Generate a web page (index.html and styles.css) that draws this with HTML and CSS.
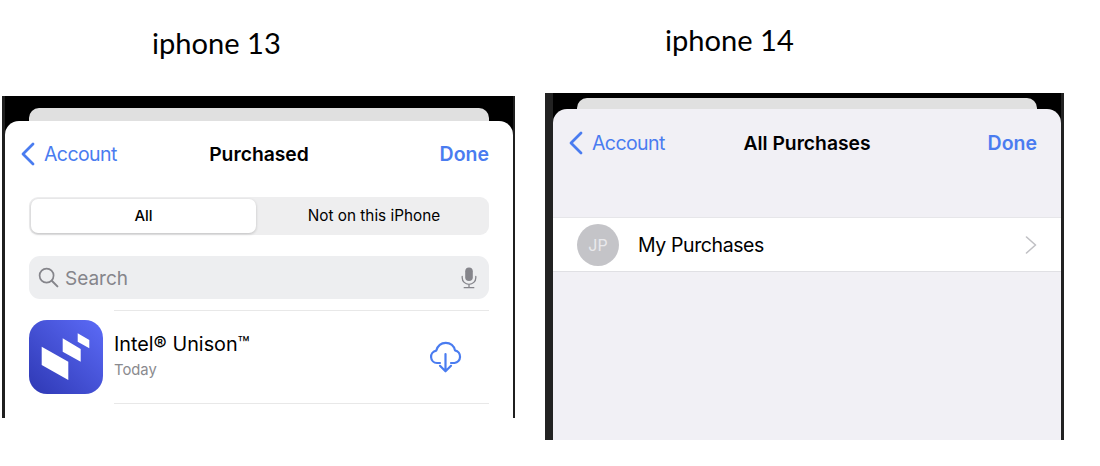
FILE: index.html
```html
<!DOCTYPE html>
<html lang="en">
<head>
  <meta charset="UTF-8">
  <title>iphone 13 / iphone 14</title>
  <link rel="stylesheet" href="styles.css">
</head>
<body>
  <div class="compare">
    <section class="col col-13">
      <h2 class="label">iphone 13</h2>
      <div class="phone">
        <div class="back-card"></div>
        <div class="sheet">
          <div class="nav">
            <a class="back" href="#">
              <svg width="15" height="24" viewBox="0 0 15 24"><path d="M13 2 3 12l10 10" fill="none" stroke="#4a7cf0" stroke-width="2.8" stroke-linecap="round" stroke-linejoin="round"/></svg>
              <span>Account</span>
            </a>
            <div class="nav-title">Purchased</div>
            <a class="done" href="#">Done</a>
          </div>

          <div class="segment">
            <div class="seg-item seg-active">All</div>
            <div class="seg-item seg-other">Not on this iPhone</div>
          </div>

          <div class="search">
            <svg width="21" height="21" viewBox="0 0 21 21"><circle cx="8.6" cy="8.6" r="7" fill="none" stroke="#85858b" stroke-width="1.7"/><path d="m13.8 13.8 5.6 5.6" stroke="#85858b" stroke-width="2" stroke-linecap="round"/></svg>
            <span class="search-text">Search</span>
            <svg class="mic" width="16" height="22" viewBox="0 0 16 22"><rect x="4.2" y="0.5" width="7.6" height="13.5" rx="3.8" fill="#85858b"/><path d="M1.2 9.5v1.2c0 3.7 3 6.6 6.8 6.6s6.800-2.900 6.800-6.600V9.500M8 17.300v3.200M3.200 20.700h9.600" fill="none" stroke="#85858b" stroke-width="1.300" stroke-linecap="round"/></svg>
          </div>

          <div class="app-row">
            <svg class="app-icon" width="74" height="74" viewBox="0 0 74 74">
              <defs>
                <linearGradient id="appgrad" x1="0" y1="1" x2="1" y2="0">
                  <stop offset="0" stop-color="#2e38b4"/>
                  <stop offset="1" stop-color="#5c6bf7"/>
                </linearGradient>
              </defs>
              <rect width="74" height="74" rx="18" fill="url(#appgrad)"/>
              <path d="M12.7 26.7 39.3 41.7V60L12.7 45Z M33.7 18.3 51.7 29V41.700L33.700 31.700Z M48.700 13.300 60.300 20V28.300L48.700 21.700Z" fill="#fff"/>
            </svg>
            <div class="app-body">
              <div class="app-info">
                <div class="app-name">Intel® Unison™</div>
                <div class="app-date">Today</div>
              </div>
              <svg class="cloud" width="33" height="32" viewBox="0 0 33 32"><path d="M11 22H8a6.200 6.200 0 0 1-.8-12.300C8.600 4.900 12.300 1.800 16.800 1.800c4.600 0 8.300 3.200 9.200 7.600A6.400 6.400 0 0 1 25.500 22H22" fill="none" stroke="#4a7cf0" stroke-width="2.200" stroke-linecap="round" stroke-linejoin="round"/><path d="M16.500 13v17M11 24.800l5.500 5.500 5.500-5.500" fill="none" stroke="#4a7cf0" stroke-width="2.200" stroke-linecap="round" stroke-linejoin="round"/></svg>
            </div>
          </div>
        </div>
      </div>
    </section>

    <section class="col col-14">
      <h2 class="label">iphone 14</h2>
      <div class="phone">
        <div class="back-card"></div>
        <div class="sheet sheet-grey">
          <div class="nav">
            <a class="back" href="#">
              <svg width="15" height="24" viewBox="0 0 15 24"><path d="M13 2 3 12l10 10" fill="none" stroke="#4a7cf0" stroke-width="2.800" stroke-linecap="round" stroke-linejoin="round"/></svg>
              <span>Account</span>
            </a>
            <div class="nav-title">All Purchases</div>
            <a class="done" href="#">Done</a>
          </div>

          <div class="list-row">
            <div class="avatar">JP</div>
            <div class="row-title">My Purchases</div>
            <svg width="12" height="18" viewBox="0 0 12 18"><path d="m1.500 1 9 8-9 8" fill="none" stroke="#c0c0c4" stroke-width="1.600" stroke-linecap="round" stroke-linejoin="round"/></svg>
          </div>
        </div>
      </div>
    </section>
  </div>
</body>
</html>
```

FILE: styles.css
```css
body { margin: 0; background: #fff; color: #000; font-family: Inter, 'Liberation Sans', Arial, sans-serif; }
a { text-decoration: none; }

.compare { display: flex; gap: 30px; padding-left: 2px; }

.label { margin: 0; font-family: Lato, 'Open Sans', sans-serif; font-size: 29.1px; font-weight: 400; line-height: 36px; }
.col-13 { width: 513px; padding-top: 25px; }
.col-13 .label { padding-left: 150px; margin-bottom: 35px; }
.col-14 { width: 519px; padding-top: 22px; }
.col-14 .label { padding-left: 120px; margin-bottom: 35px; }

/* phones */
.phone { background: #000; overflow: hidden; display: flex; flex-direction: column; box-sizing: border-box; }
.col-13 .phone { height: 322px; padding: 12px 2px 0 3px; box-shadow: inset 3px 0 0 #1f1f1f, inset -2px 0 0 #1f1f1f; }
.col-14 .phone { height: 347px; padding: 5px 3px 0 8px; box-shadow: inset 8px 0 0 #222, inset -3px 0 0 #222; }

.back-card { height: 13px; margin: 0 24px; background: #e0e0e0; border-radius: 10px 10px 0 0; flex: none; }
.col-14 .back-card { height: 11px; }

.sheet { flex: 1; background: #fff; border-radius: 14px 14px 0 0; padding: 0 24px; }
.sheet-grey { background: #f1f0f5; }

/* nav */
.nav { display: grid; grid-template-columns: 1fr auto 1fr; align-items: center; height: 28px; margin: 19px -9px 0; font-size: 19.5px; }
.col-14 .nav { margin-top: 20px; }
.back { display: flex; align-items: center; gap: 9px; color: #4a7cf0; letter-spacing: -0.6px; }
.nav-title { font-weight: 600; font-size: 19.3px; }
.done { justify-self: end; margin-right: 9px; color: #4a7cf0; font-weight: 600; }

/* segmented control */
.segment { display: flex; height: 38px; margin-top: 29px; padding: 2px; box-sizing: border-box; background: #eeeeef; border-radius: 9px; font-size: 15px; }
.seg-item { display: flex; align-items: center; justify-content: center; padding-bottom: 2px; box-sizing: border-box; }
.seg-other { flex: 1; padding-left: 5px; font-size: 15.3px; }
.seg-active { flex: none; width: 225px; background: #fff; border-radius: 7px; box-shadow: 0 1px 3px rgba(0,0,0,0.2); font-weight: 500; }

/* search */
.search { display: flex; align-items: center; gap: 6px; height: 43px; margin-top: 21px; padding: 0 12px 0 9px; background: #edeef0; border-radius: 11px; color: #85858b; font-size: 19px; }
.search-text { flex: 1; padding-top: 1px; }

/* app row */
.app-row { display: flex; gap: 11px; margin-top: 11px; }
.app-icon { flex: none; margin-top: 10px; }
.app-body { flex: 1; display: flex; align-items: center; justify-content: space-between; height: 92px; padding-right: 27px; border-top: 1px solid #e8e8e8; border-bottom: 1px solid #e8e8e8; }
.app-info { margin-top: -4px; }
.app-name { font-size: 19.8px; line-height: 24px; }
.app-date { margin-top: 5px; color: #8a8a8e; font-size: 14.8px; line-height: 18px; }

/* list row */
.list-row { display: flex; align-items: center; gap: 20px; height: 55px; margin: 60px -24px 0; padding: 0 24px; background: #fff; border-top: 1px solid #e6e6e9; border-bottom: 1px solid #e0e0e4; box-sizing: border-box; }
.avatar { width: 42px; height: 42px; margin-right: -1px; border-radius: 50%; background: #c4c4c8; color: #e9e9ec; display: flex; align-items: center; justify-content: center; font-size: 16px; flex: none; }
.row-title { flex: 1; font-size: 19.5px; letter-spacing: -0.4px; }
```
